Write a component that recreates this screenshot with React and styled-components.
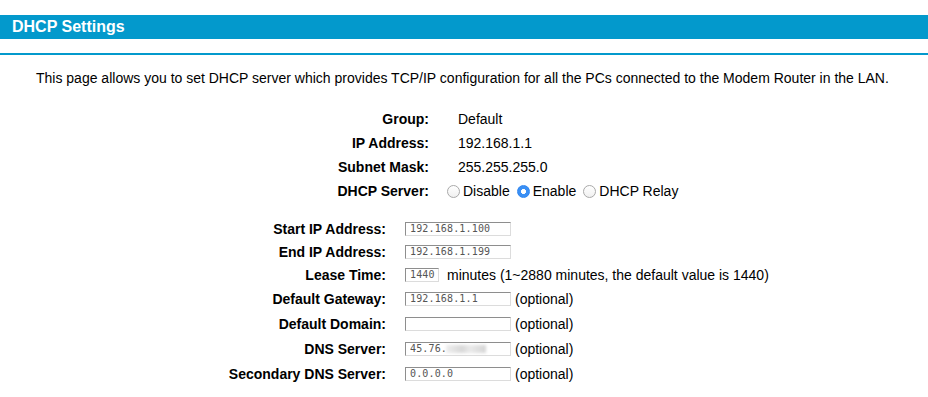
import React, { useState } from 'react';
import styled, { createGlobalStyle } from 'styled-components';

const GlobalStyle = createGlobalStyle`
	body {
		margin: 0;
		background: #ffffff;
		font-family: 'Liberation Sans', Arial, sans-serif;
		color: #000000;
	}
`;

const info = [
	{ label: 'Group:', value: 'Default' },
	{ label: 'IP Address:', value: '192.168.1.1' },
	{ label: 'Subnet Mask:', value: '255.255.255.0' },
];

const App = () => {
	const [mode, setMode] = useState('enable');

	return (
		<>
			<GlobalStyle />
			<Page>
				<TitleBar>DHCP Settings</TitleBar>
				<Divider />
				<Intro>
					This page allows you to set DHCP server which provides TCP/IP
					configuration for all the PCs connected to the Modem Router in the LAN.
				</Intro>
				<InfoGrid>
					{info.map((row) => (
						<React.Fragment key={row.label}>
							<Label>{row.label}</Label>
							<Value>{row.value}</Value>
						</React.Fragment>
					))}
					<Label>DHCP Server:</Label>
					<RadioGroup>
						<RadioOption>
							<Radio
								type='radio'
								name='dhcp'
								checked={mode === 'disable'}
								onChange={() => setMode('disable')}
							/>
							Disable
						</RadioOption>
						<RadioOption>
							<Radio
								type='radio'
								name='dhcp'
								checked={mode === 'enable'}
								onChange={() => setMode('enable')}
							/>
							Enable
						</RadioOption>
						<RadioOption>
							<Radio
								type='radio'
								name='dhcp'
								checked={mode === 'relay'}
								onChange={() => setMode('relay')}
							/>
							DHCP Relay
						</RadioOption>
					</RadioGroup>
				</InfoGrid>
				<FormGrid>
					<FormLabel>Start IP Address:</FormLabel>
					<Field>
						<TextBox defaultValue='192.168.1.100' />
					</Field>
					<FormLabel>End IP Address:</FormLabel>
					<Field>
						<TextBox defaultValue='192.168.1.199' />
					</Field>
					<FormLabel>Lease Time:</FormLabel>
					<Field>
						<TextBox short defaultValue='1440' />
						<Note wide>minutes (1~2880 minutes, the default value is 1440)</Note>
					</Field>
					<FormLabel>Default Gateway:</FormLabel>
					<Field>
						<TextBox defaultValue='192.168.1.1' />
						<Note>(optional)</Note>
					</Field>
					<FormLabel>Default Domain:</FormLabel>
					<Field>
						<TextBox defaultValue='' />
						<Note>(optional)</Note>
					</Field>
					<FormLabel>DNS Server:</FormLabel>
					<Field>
						<Masked>
							<TextBox defaultValue='45.76.' />
							<Blur />
						</Masked>
						<Note>(optional)</Note>
					</Field>
					<FormLabel>Secondary DNS Server:</FormLabel>
					<Field>
						<TextBox defaultValue='0.0.0.0' />
						<Note>(optional)</Note>
					</Field>
				</FormGrid>
			</Page>
		</>
	);
};

const Page = styled.div`
	padding-top: 15px;
	width: 928px;
`;

const TitleBar = styled.div`
	height: 24px;
	line-height: 24px;
	background: #0399cc;
	color: #ffffff;
	font-size: 16px;
	font-weight: bold;
	padding-left: 12px;
`;

const Divider = styled.div`
	margin-top: 14px;
	height: 2px;
	background: #0399cc;
`;

const Intro = styled.p`
	margin: 14px 0 0;
	padding-left: 36px;
	font-size: 14px;
	line-height: 18px;
`;

const InfoGrid = styled.div`
	margin-top: 20px;
	display: grid;
	grid-template-columns: 429px 1fr;
	grid-auto-rows: 24px;
	column-gap: 18px;
	align-items: center;
	font-size: 14px;
`;

const Label = styled.div`
	text-align: right;
	font-weight: bold;
`;

const Value = styled.div`
	padding-left: 11px;
`;

const RadioGroup = styled.div`
	display: flex;
	align-items: center;
`;

const RadioOption = styled.label`
	display: flex;
	align-items: center;
	margin-right: 7px;
`;

const Radio = styled.input`
	appearance: none;
	width: 13px;
	height: 13px;
	margin: 0 3px 0 0;
	border-radius: 50%;
	border: 1px solid #a9a9a9;
	background: linear-gradient(#ffffff, #f0f0f0);
	box-sizing: border-box;
	&:checked {
		border-color: #2f86f0;
		background: radial-gradient(circle, #ffffff 0 2.2px, #3a8ff4 2.8px);
	}
`;

const FormGrid = styled.div`
	margin-top: 14px;
	display: grid;
	grid-template-columns: 386px 1fr;
	grid-template-rows: 23px 23px 23px 25px 25px 25px 25px;
	column-gap: 19px;
	align-items: center;
	font-size: 14px;
`;

const FormLabel = styled.div`
	text-align: right;
	font-weight: bold;
`;

const Field = styled.div`
	display: flex;
	align-items: center;
`;

const TextBox = styled.input`
	box-sizing: border-box;
	width: ${(p) => (p.short ? '34px' : '106px')};
	height: 14px;
	margin: 0;
	padding: 0 0 0 4px;
	border: 1px solid;
	border-color: #8e8e8e #dcdcdc #dcdcdc #8e8e8e;
	background: #ffffff;
	font-family: 'DejaVu Sans Mono', 'Liberation Mono', monospace;
	font-size: 10px;
	letter-spacing: 0.15px;
	color: #555555;
	outline: none;
`;

const Masked = styled.div`
	position: relative;
	display: flex;
`;

const Blur = styled.span`
	position: absolute;
	left: 41px;
	top: 3px;
	width: 40px;
	height: 8px;
	background: linear-gradient(90deg, #eeeeee, #d8d8d8 40%, #eaeaea 60%, #d5d5d5);
	filter: blur(1.5px);
`;

const Note = styled.span`
	margin-left: ${(p) => (p.wide ? '8px' : '4px')};
`;

export default App;
